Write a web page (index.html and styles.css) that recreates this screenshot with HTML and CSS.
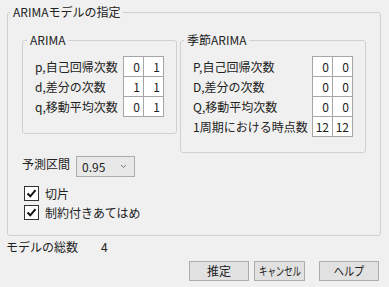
FILE: index.html
```html
<!DOCTYPE html>
<html lang="ja">
<head>
  <meta charset="UTF-8">
  <title>ARIMAモデルの指定</title>
  <link rel="stylesheet" href="styles.css">
</head>
<body>
  <fieldset class="group outer">
    <legend>ARIMAモデルの指定</legend>
    <div class="outer-body">
      <div class="boxes">
        <fieldset class="group arima">
          <legend>ARIMA</legend>
          <div class="group-body">
            <table class="orders">
              <tr><td class="label">p,自己回帰次数</td><td class="cell">0</td><td class="cell">1</td></tr>
              <tr><td class="label">d,差分の次数</td><td class="cell">1</td><td class="cell">1</td></tr>
              <tr><td class="label">q,移動平均次数</td><td class="cell">0</td><td class="cell">1</td></tr>
            </table>
          </div>
        </fieldset>

        <fieldset class="group seasonal">
          <legend>季節ARIMA</legend>
          <div class="group-body">
            <table class="orders">
              <tr><td class="label">P,自己回帰次数</td><td class="cell">0</td><td class="cell">0</td></tr>
              <tr><td class="label">D,差分の次数</td><td class="cell">0</td><td class="cell">0</td></tr>
              <tr><td class="label">Q,移動平均次数</td><td class="cell">0</td><td class="cell">0</td></tr>
              <tr><td class="label">1周期における時点数</td><td class="cell">12</td><td class="cell">12</td></tr>
            </table>
          </div>
        </fieldset>
      </div>

      <div class="interval">
        <span>予測区間</span>
        <div class="select">
          <span>0.95</span>
          <svg width="7" height="5" viewBox="0 0 7 5"><path d="M1 1 L3.5 3.5 L6 1" fill="none" stroke="#777" stroke-width="1"/></svg>
        </div>
      </div>

      <label class="check">
        <span class="box"><svg width="11" height="11" viewBox="0 0 11 11"><path d="M1.5 5.5 L4.3 8.3 L9.5 2.2" fill="none" stroke="#111" stroke-width="2"/></svg></span>
        切片
      </label>
      <label class="check">
        <span class="box"><svg width="11" height="11" viewBox="0 0 11 11"><path d="M1.5 5.5 L4.3 8.3 L9.5 2.2" fill="none" stroke="#111" stroke-width="2"/></svg></span>
        制約付きあてはめ
      </label>
    </div>
  </fieldset>

  <div class="total">
    <span>モデルの総数</span>
    <span class="count">4</span>
  </div>

  <div class="buttons">
    <button>推定</button>
    <button class="cancel"><span class="narrow">キャンセル</span></button>
    <button><span class="narrow help">ヘルプ</span></button>
  </div>
</body>
</html>
```

FILE: styles.css
```css
/* General Styles */
body {
  font-family: "Noto Sans CJK JP", "Noto Sans", sans-serif;
  font-size: 12px;
  line-height: 16px;
  color: #222;
  background-color: #f0f0f0;
  margin: 0;
  padding: 4px 0 0 0;
  width: 389px;
  height: 283px;
  overflow: hidden;
}

/* Group boxes */
.group {
  border: 1px solid #d0d0d0;
  border-radius: 3px;
  margin: 0;
  padding: 0;
  box-sizing: border-box;
}

.group legend {
  padding: 0 3px;
  line-height: 16px;
}

.outer {
  margin-left: 7px;
  width: 374px;
  height: 232px;
}

.outer > legend {
  margin-left: 2px;
}

.outer-body {
  padding: 12px 0 0 14px;
}

.boxes {
  display: flex;
  align-items: flex-start;
  gap: 3px;
}

.group-body {
  padding: 8px 0 0 12px;
}

.arima {
  width: 155px;
  height: 102px;
}

.arima > legend {
  margin-left: 4px;
}

.seasonal {
  width: 186px;
  height: 121px;
}

.seasonal > legend {
  margin-left: 3px;
}

/* Order tables */
.orders {
  border-collapse: collapse;
}

.orders td {
  height: 20px;
  padding: 0;
  white-space: nowrap;
}

.orders .label {
  padding-right: 4px;
}

.arima .label {
  width: 84px;
}

.seasonal .label {
  width: 115px;
}

.orders .cell {
  width: 20px;
  background-color: #fff;
  border: 1px solid #a6a6a6;
  text-align: right;
  padding-right: 3px;
  box-sizing: border-box;
}

/* Forecast interval */
.interval {
  display: flex;
  align-items: center;
  gap: 6px;
  margin-top: 3px;
  height: 21px;
}

.interval > span {
  margin-top: -6px;
}

.select {
  display: flex;
  align-items: center;
  justify-content: space-between;
  width: 59px;
  height: 21px;
  box-sizing: border-box;
  border: 1px solid #adadad;
  background-color: #e8e8e8;
  padding: 0 7px 0 5px;
}

/* Checkboxes */
.check {
  display: flex;
  align-items: center;
  gap: 6px;
  height: 19px;
  margin-left: 2px;
}

.interval + .check {
  margin-top: 7px;
}

.box {
  display: flex;
  align-items: center;
  justify-content: center;
  width: 13px;
  height: 13px;
  border: 1px solid #333;
  background-color: #fff;
}

/* Totals */
.total {
  display: flex;
  margin: 3px 0 0 6px;
  height: 16px;
}

.total .count {
  margin-left: 23px;
}

/* Buttons */
.buttons {
  display: flex;
  justify-content: flex-end;
  gap: 5px;
  margin: 6px 10px 0 0;
}

button {
  display: flex;
  align-items: center;
  justify-content: center;
  font-family: inherit;
  font-size: 12px;
  line-height: 16px;
  color: #222;
  background-color: #e1e1e1;
  border: 1px solid #adadad;
  width: 60px;
  height: 20px;
  padding: 0;
  white-space: nowrap;
}

.buttons .cancel {
  width: 51px;
  margin-right: 9px;
}

.narrow {
  display: inline-block;
  transform: scaleX(0.7);
}

.narrow.help {
  transform: scaleX(0.85);
}
```
